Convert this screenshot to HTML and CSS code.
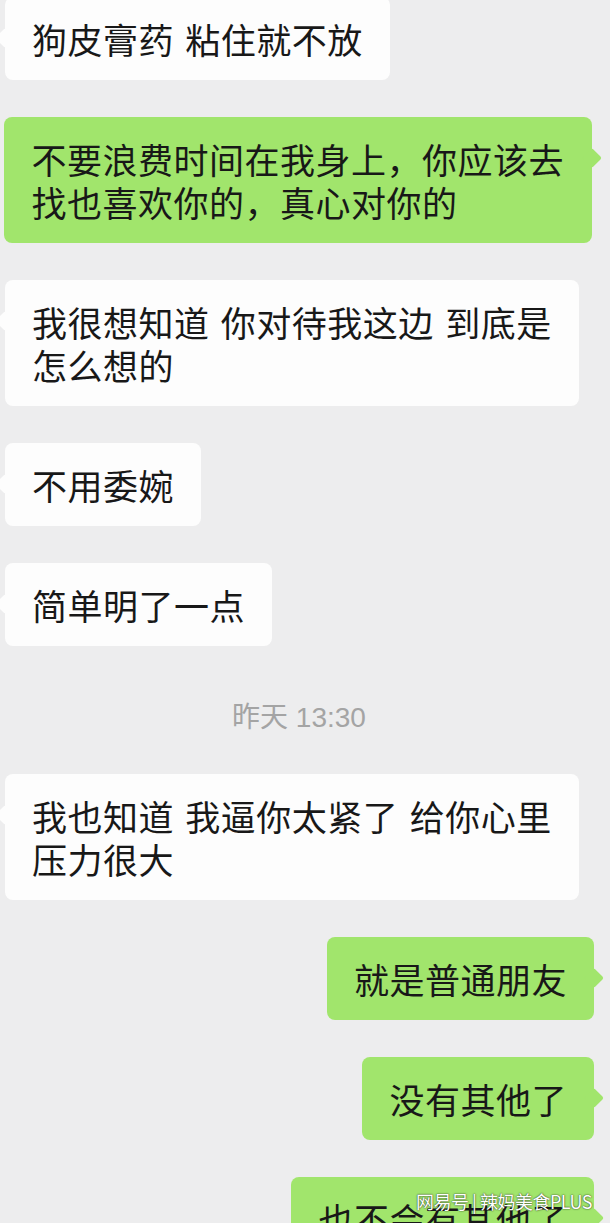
FILE: index.html
```html
<!DOCTYPE html>
<html lang="zh-CN">
<head>
<meta charset="utf-8">
<title>聊天</title>
<link rel="stylesheet" href="styles.css">
</head>
<body>
<div class="chat">
  <div class="row left"><div class="bubble white">狗皮膏药 粘住就不放</div></div>
  <div class="row right wide"><div class="bubble green">不要浪费时间在我身上，你应该去<br>找也喜欢你的，真心对你的</div></div>
  <div class="row left"><div class="bubble white">我很想知道 你对待我这边 到底是<br>怎么想的</div></div>
  <div class="row left"><div class="bubble white">不用委婉</div></div>
  <div class="row left"><div class="bubble white">简单明了一点</div></div>
  <div class="time">昨天 13:30</div>
  <div class="row left"><div class="bubble white">我也知道 我逼你太紧了 给你心里<br>压力很大</div></div>
  <div class="row right"><div class="bubble green">就是普通朋友</div></div>
  <div class="row right"><div class="bubble green">没有其他了</div></div>
  <div class="row right"><div class="bubble green">也不会有其他了</div></div>
</div>
<div class="watermark">网易号 | 辣妈美食PLUS</div>
</body>
</html>
```
FILE: styles.css
```css
html, body {
  margin: 0;
  padding: 0;
}
body {
  background: #ededee;
  font-family: "Noto Sans CJK SC", "Noto Sans", sans-serif;
  height: 1223px;
  overflow: hidden;
  position: relative;
}
.chat {
  display: flex;
  flex-direction: column;
  gap: 37px;
  margin-top: -3px;
}
.row {
  display: flex;
}
.row.left {
  justify-content: flex-start;
  padding-left: 5px;
}
.row.right {
  justify-content: flex-end;
  padding-right: 16px;
}
.row.right.wide {
  padding-right: 18px;
}
.bubble {
  position: relative;
  padding: 20px 27px;
  font-size: 35px;
  line-height: 43px;
  letter-spacing: 0.5px;
  word-spacing: 3px;
  color: #181818;
  border-radius: 8px;
  white-space: nowrap;
}
.wide .bubble {
  padding: 20px 28px 20px 27px;
}
.bubble::before {
  content: "";
  position: absolute;
  top: 34px;
  width: 14px;
  height: 14px;
  border-radius: 2px;
  transform: rotate(45deg);
}
.white {
  background: #fdfdfd;
}
.white::before {
  left: -7px;
  background: #fdfdfd;
}
.green {
  background: #a1e56c;
}
.green::before {
  right: -7px;
  background: #a1e56c;
}
.time {
  text-align: center;
  font-family: "Liberation Sans", "Noto Sans CJK SC", sans-serif;
  font-size: 28px;
  line-height: 36px;
  color: #a4a4a4;
  margin: 17px 0 1px;
  padding-right: 12px;
}
.watermark {
  position: absolute;
  right: 18px;
  top: 1189px;
  font-size: 18px;
  line-height: 24px;
  color: #ffffff;
  text-shadow: 0 0 2px rgba(0, 0, 0, 0.6), 0 0 1px rgba(0, 0, 0, 0.6);
  letter-spacing: -0.5px;
}
```
